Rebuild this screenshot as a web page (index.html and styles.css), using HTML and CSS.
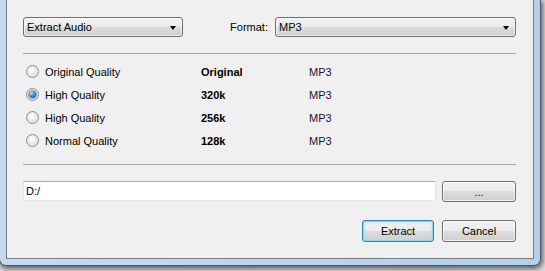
FILE: index.html
```html
<!DOCTYPE html>
<html>
<head>
<meta charset="utf-8">
<link rel="stylesheet" href="styles.css">
</head>
<body>
<div class="frame">
  <div class="content">
    <div class="toprow">
      <div class="combo combo-mode"><span class="combo-text">Extract Audio</span><i class="arrow"></i></div>
      <div class="fmt">
        <span class="lbl">Format:</span>
        <div class="combo combo-fmt"><span class="combo-text">MP3</span><i class="arrow"></i></div>
      </div>
    </div>
    <div class="sep"></div>
    <div class="options">
      <div class="opt"><span class="radio"></span><span class="name">Original Quality</span><span class="rate">Original</span><span class="codec">MP3</span></div>
      <div class="opt"><span class="radio checked"></span><span class="name">High Quality</span><span class="rate">320k</span><span class="codec">MP3</span></div>
      <div class="opt"><span class="radio"></span><span class="name">High Quality</span><span class="rate">256k</span><span class="codec">MP3</span></div>
      <div class="opt"><span class="radio"></span><span class="name">Normal Quality</span><span class="rate">128k</span><span class="codec">MP3</span></div>
    </div>
    <div class="sep sep2"></div>
    <div class="pathrow">
      <div class="path">D:/</div>
      <button class="btn btn-browse">...</button>
    </div>
    <div class="actions">
      <button class="btn btn-primary">Extract</button>
      <button class="btn btn-cancel">Cancel</button>
    </div>
  </div>
</div>
</body>
</html>
```
FILE: styles.css
```css
html, body {
  margin: 0;
  padding: 0;
}
body {
  width: 545px;
  height: 271px;
  overflow: hidden;
  background: #dcdcdc;
  font-family: "Liberation Sans", Arial, sans-serif;
  font-size: 11px;
  color: #000;
}
.frame {
  box-sizing: border-box;
  margin-left: -1px;
  width: 542px;
  height: 266px;
  padding: 0 6px 6px 6px;
  background: linear-gradient(90deg, #c4daf1, #b6cfea);
  border: 1px solid #4a5763;
  border-top: none;
  border-radius: 0 0 7px 7px;
  box-shadow: 1px 2px 5px 1px rgba(0, 0, 0, 0.55);
}
.content {
  box-sizing: border-box;
  height: 259px;
  background: #f0f0f0;
  border: 1px solid #6f7f8f;
  border-top: none;
  padding: 17px 17px 0 16px;
  display: flex;
  flex-direction: column;
}
.toprow {
  display: flex;
  justify-content: space-between;
  align-items: center;
  height: 20px;
}
.combo {
  box-sizing: border-box;
  height: 20px;
  border: 1px solid #707070;
  border-radius: 3px;
  background: linear-gradient(#f2f2f2 0%, #ebebeb 50%, #dddddd 50%, #cfcfcf 100%);
  box-shadow: inset 0 0 0 1px rgba(255, 255, 255, 0.6);
  display: flex;
  align-items: center;
  justify-content: space-between;
  padding: 0 6px 0 3px;
}
.combo-mode {
  width: 160px;
}
.combo-fmt {
  width: 241px;
}
.combo-text {
  line-height: 14px;
}
.arrow {
  width: 0;
  height: 0;
  border-left: 3.5px solid transparent;
  border-right: 3.5px solid transparent;
  border-top: 4px solid #000;
  margin-top: 1px;
}
.fmt {
  display: flex;
  align-items: center;
  gap: 7px;
}
.sep {
  height: 1px;
  background: #a8a8a8;
  margin-top: 16px;
}
.sep2 {
  margin-top: 12px;
}
.options {
  margin-top: 6px;
  display: flex;
  flex-direction: column;
}
.opt {
  height: 23px;
  display: grid;
  grid-template-columns: 22px 156px 108px auto;
  align-items: center;
}
.radio {
  box-sizing: border-box;
  width: 13px;
  height: 13px;
  margin-left: 3px;
  border-radius: 50%;
  border: 1px solid #8c8c8c;
  background: radial-gradient(circle at 40% 35%, #ffffff 0%, #f0f0f0 35%, #cfcfcf 100%);
  box-shadow: inset 0 0 0 1px #e6e6e6;
  display: flex;
  align-items: center;
  justify-content: center;
}
.radio.checked::after {
  content: "";
  width: 7px;
  height: 7px;
  border-radius: 50%;
  background: radial-gradient(circle at 35% 30%, #b8e4fb 0%, #3b8fd0 45%, #11508e 100%);
  box-shadow: 0 0 0 0.5px #1d4d7a;
}
.rate {
  font-weight: bold;
}
.codec {
  color: #151535;
}
.pathrow {
  margin-top: 16px;
  display: flex;
  justify-content: space-between;
  align-items: flex-start;
}
.path {
  box-sizing: border-box;
  width: 413px;
  height: 20px;
  background: #fff;
  border: 1px solid #e2e3ea;
  border-top-color: #abadb3;
  border-bottom-color: #e3e9ef;
  padding: 0 2px;
  line-height: 18px;
}
.btn {
  box-sizing: border-box;
  height: 22px;
  border: 1px solid #707070;
  border-radius: 3px;
  background: linear-gradient(#f2f2f2 0%, #ebebeb 50%, #dddddd 50%, #cfcfcf 100%);
  box-shadow: inset 0 0 0 1px rgba(255, 255, 255, 0.7);
  font-family: "Liberation Sans", Arial, sans-serif;
  font-size: 11px;
  color: #000;
  padding: 0;
  margin: 0;
}
.btn-browse {
  width: 74px;
  height: 21px;
}
.actions {
  margin-top: 18px;
  display: flex;
  justify-content: flex-end;
  gap: 8px;
}
.btn-primary {
  width: 72px;
  border-color: #3c7fb1;
  box-shadow: inset 0 0 0 1px #8fd3f3, inset 0 0 2px 2px rgba(160, 225, 250, 0.5);
}
.btn-cancel {
  width: 74px;
}
```
